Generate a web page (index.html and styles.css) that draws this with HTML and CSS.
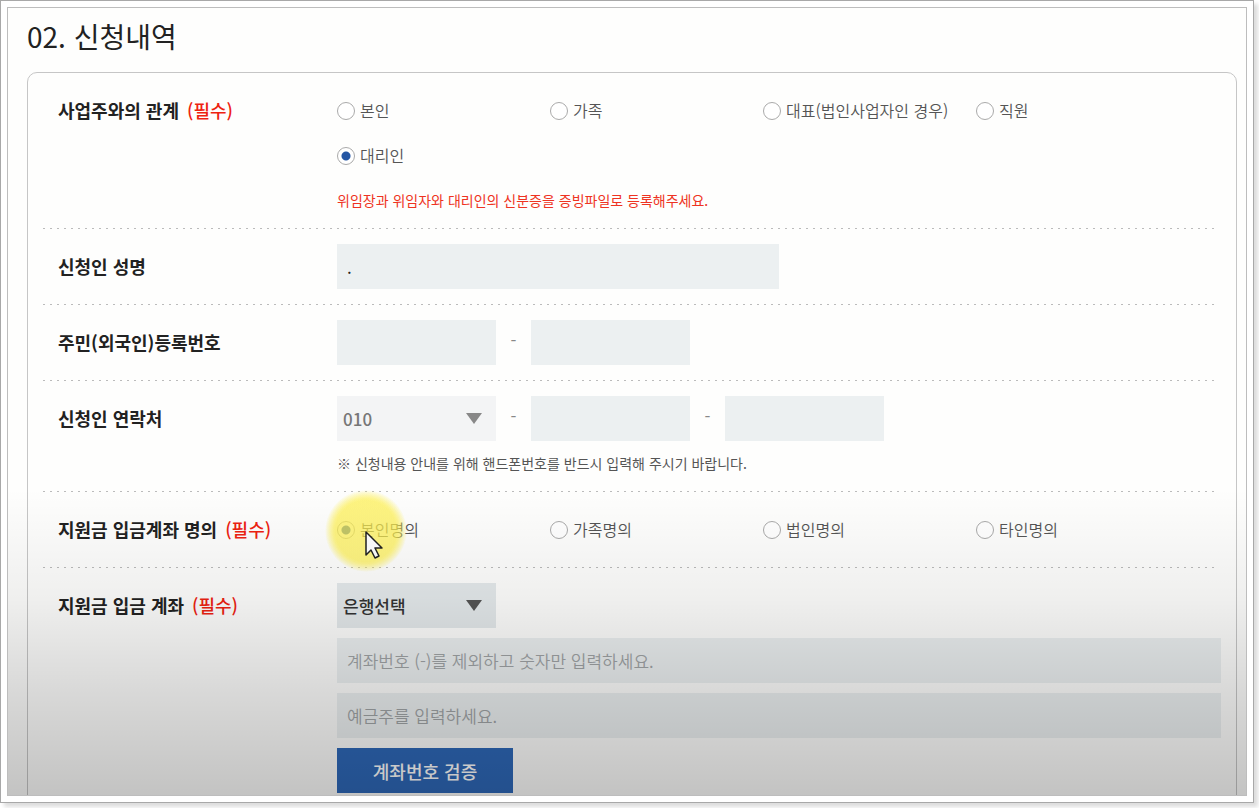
FILE: index.html
```html
<!DOCTYPE html>
<html lang="ko">

<head>
    <meta charset="UTF-8">
    <meta name="viewport" content="width=device-width, initial-scale=1.0">
    <title>신청내역</title>
    <link rel="stylesheet" href="styles.css">
</head>

<body>

    <div class="frame">
        <main class="screen">
            <h1>02. 신청내역</h1>

            <form class="card">
                <div class="row">
                    <div class="label" id="relationLabel">사업주와의 관계 <span class="required">(필수)</span></div>
                    <div class="content">
                        <div class="radios" role="radiogroup" aria-labelledby="relationLabel">
                            <label><input type="radio" name="relation">본인</label>
                            <label><input type="radio" name="relation">가족</label>
                            <label><input type="radio" name="relation">대표(법인사업자인 경우)</label>
                            <label><input type="radio" name="relation">직원</label>
                            <label><input type="radio" name="relation" checked>대리인</label>
                        </div>
                        <p class="notice">위임장과 위임자와 대리인의 신분증을 증빙파일로 등록해주세요.</p>
                    </div>
                </div>

                <div class="row">
                    <label class="label" for="applicantName">신청인 성명</label>
                    <div class="content">
                        <input type="text" class="half" id="applicantName" value=".">
                    </div>
                </div>

                <div class="row">
                    <label class="label" for="regFront">주민(외국인)등록번호</label>
                    <div class="content">
                        <div class="parts">
                            <input type="text" class="part" id="regFront">
                            <span class="dash">-</span>
                            <input type="password" class="part" aria-label="등록번호 뒷자리">
                        </div>
                    </div>
                </div>

                <div class="row">
                    <label class="label" for="phone">신청인 연락처</label>
                    <div class="content">
                        <div class="parts">
                            <div class="select disabled">
                                <select id="phone" disabled>
                                    <option>010</option>
                                </select>
                            </div>
                            <span class="dash">-</span>
                            <input type="text" class="part" aria-label="연락처 가운데 자리">
                            <span class="dash">-</span>
                            <input type="text" class="part" aria-label="연락처 끝자리">
                        </div>
                        <p class="help">※ 신청내용 안내를 위해 핸드폰번호를 반드시 입력해 주시기 바랍니다.</p>
                    </div>
                </div>

                <div class="row">
                    <div class="label" id="holderLabel">지원금 입금계좌 명의 <span class="required">(필수)</span></div>
                    <div class="content">
                        <div class="radios" role="radiogroup" aria-labelledby="holderLabel">
                            <label class="pointed">
                                <input type="radio" name="holder" checked>본인명의
                                <span class="spot"></span>
                                <svg class="cursor" viewBox="0 0 18 28" aria-hidden="true">
                                    <path d="M1 1v23l5-5 4 8 4-2-4-8h7z" fill="#fff" stroke="#222" stroke-width="1.5" stroke-linejoin="round" />
                                </svg>
                            </label>
                            <label><input type="radio" name="holder">가족명의</label>
                            <label><input type="radio" name="holder">법인명의</label>
                            <label><input type="radio" name="holder">타인명의</label>
                        </div>
                    </div>
                </div>

                <div class="row">
                    <label class="label" for="bank">지원금 입금 계좌 <span class="required">(필수)</span></label>
                    <div class="content">
                        <div class="select">
                            <select id="bank">
                                <option>은행선택</option>
                            </select>
                        </div>
                        <input type="text" placeholder="계좌번호 (-)를 제외하고 숫자만 입력하세요." aria-label="계좌번호">
                        <input type="text" placeholder="예금주를 입력하세요." aria-label="예금주">
                        <button type="button">계좌번호 검증</button>
                    </div>
                </div>
            </form>
        </main>
    </div>

</body>

</html>
```
FILE: styles.css
```css
* {
    box-sizing: border-box;
}

body {
    margin: 0;
    height: 100vh;
    padding: 0 5px 5px 0;
    background-color: #fff;
    color: #222;
    font-family: "Noto Sans CJK KR", sans-serif;
    overflow: hidden;
}

.frame {
    height: 100%;
    padding: 6px;
    border: 1px solid #a8a8a8;
    background-color: #fff;
    box-shadow: 4px 4px 4px #ddd;
}

.screen {
    position: relative;
    height: 100%;
    padding: 0 9px 0 19px;
    border: 1px solid #bdbdbd;
    background-color: #fefefd;
    overflow: hidden;
}

/* shade over the lower part of the screen */
.screen::after {
    content: "";
    position: absolute;
    inset: 0;
    background: linear-gradient(transparent 61%, rgba(0, 0, 0, 0.06) 75%, rgba(0, 0, 0, 0.15) 87%, rgba(0, 0, 0, 0.23));
    pointer-events: none;
}

h1 {
    margin: 0;
    padding: 8px 0 16px;
    font-size: 28px;
    font-weight: 400;
    line-height: 40px;
}

.card {
    padding: 0 15px;
    border: 1px solid #c6c6c6;
    border-radius: 10px;
}

.row {
    display: flex;
    padding: 15px 0 16px 15px;
    background: repeating-linear-gradient(90deg, #bbb 0 2px, transparent 2px 7px) left bottom / calc(100% - 4px) 1px no-repeat;
}

.row:last-child {
    background: none;
}

.label {
    flex: 0 0 279px;
    font-size: 18px;
    font-weight: 700;
    line-height: 45px;
}

.required {
    margin-left: 3px;
    color: #ee2211;
    font-weight: 500;
}

.content {
    flex: 1;
    display: flex;
    flex-direction: column;
    align-items: flex-start;
    gap: 10px;
}

.radios {
    display: grid;
    grid-template-columns: repeat(auto-fill, 213px);
    width: 100%;
}

.radios label {
    display: flex;
    align-items: center;
    gap: 5px;
    color: #555;
    font-size: 16px;
    font-weight: 350;
    line-height: 45px;
    white-space: nowrap;
}

input[type="radio"] {
    appearance: none;
    width: 18px;
    height: 18px;
    margin: 0;
    border: 1px solid #aaa;
    border-radius: 50%;
    background-color: #fff;
}

input[type="radio"]:checked {
    background: radial-gradient(circle, #2456a4 4px, #fff 5px);
}

.notice,
.help {
    margin: 0;
    font-size: 14px;
    line-height: 25px;
}

.notice {
    color: #ee3322;
}

.help {
    color: #555;
}

input[type="text"],
input[type="password"] {
    width: 100%;
    height: 45px;
    padding: 0 10px;
    border: none;
    background-color: #ecf0f1;
    color: #222;
    font-family: inherit;
    font-size: 17px;
}

input::placeholder {
    color: #a0a4a6;
    font-weight: 350;
}

input.half {
    width: 50%;
}

.parts {
    display: flex;
}

.parts .part,
.select {
    width: 159px;
}

.dash {
    width: 35px;
    color: #888;
    font-size: 17px;
    line-height: 40px;
    text-align: center;
}

.select {
    position: relative;
}

.select::after {
    content: "";
    position: absolute;
    top: 17px;
    right: 14px;
    border: 8px solid transparent;
    border-top: 11px solid #555;
    border-bottom: 0;
    pointer-events: none;
}

select {
    appearance: none;
    width: 100%;
    height: 45px;
    padding: 0 6px;
    border: none;
    border-radius: 0;
    background-color: #e4e9eb;
    color: #333;
    font-family: inherit;
    font-size: 17px;
    font-weight: 500;
}

select:disabled {
    background-color: #f3f4f5;
    color: #777;
    opacity: 1;
}

.disabled::after {
    border-top-color: #888;
}

button {
    width: 176px;
    height: 45px;
    border: none;
    background-color: #2e68b8;
    color: #fff;
    font-family: inherit;
    font-size: 18px;
    font-weight: 500;
    cursor: pointer;
}

/* highlighted mouse pointer */
.pointed {
    position: relative;
}

.spot {
    position: absolute;
    top: -17px;
    left: -12px;
    width: 82px;
    height: 82px;
    border-radius: 50%;
    background: radial-gradient(circle closest-side, rgba(254, 240, 80, 0.6) 75%, rgba(254, 240, 80, 0)), radial-gradient(circle closest-side, rgba(254, 240, 80, 0.3) 80%, rgba(254, 240, 80, 0));
}

.cursor {
    position: absolute;
    top: 24px;
    left: 28px;
    width: 18px;
    height: 28px;
}
```
